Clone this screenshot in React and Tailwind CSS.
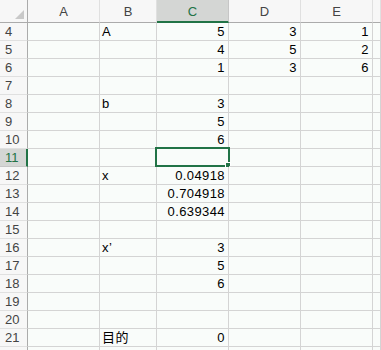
import React from "react";

const cols = ["A", "B", "C", "D", "E", ""];

// row number -> { B: label, C: value, D, E }
const data = {
  4: { B: "A", C: "5", D: "3", E: "1" },
  5: { C: "4", D: "5", E: "2" },
  6: { C: "1", D: "3", E: "6" },
  8: { B: "b", C: "3" },
  9: { C: "5" },
  10: { C: "6" },
  12: { B: "x", C: "0.04918" },
  13: { C: "0.704918" },
  14: { C: "0.639344" },
  16: { B: "x’", C: "3" },
  17: { C: "5" },
  18: { C: "6" },
  21: { B: "目的", C: "0" },
};

const rows = [];
for (let r = 4; r <= 22; r++) rows.push(r);

const SEL_COL = "C";
const SEL_ROW = 11;

export default function App() {
  return (
    <div
      className="w-[381px] h-[350px] overflow-hidden bg-[#f9fcfa] text-black"
      style={{ fontFamily: '"Liberation Sans", Arial, "Noto Sans CJK JP", sans-serif' }}
    >
      <div className="grid grid-cols-[28px_72px_57px_72px_72px_72px_1fr] auto-rows-[18px] grid-rows-[23px]">
        {/* corner */}
        <div className="relative bg-[#f7f7f7] border-r border-b border-[#ababab]">
          <div className="absolute right-[3px] bottom-[3px] w-0 h-0 border-l-[9px] border-l-transparent border-b-[9px] border-b-[#c9c9c9]" />
        </div>

        {/* column headers */}
        {cols.map((c, i) =>
          c === SEL_COL ? (
            <div
              key={i}
              className="flex items-end justify-center pb-[2px] bg-[#d4d6d4] border-r border-[#c6c6c6] border-b-2 border-b-[#217346] text-[13px] leading-[15px] text-[#217346]"
            >
              {c}
            </div>
          ) : (
            <div
              key={i}
              className="flex items-end justify-center pb-[3px] bg-[#f7f7f7] border-r border-[#e0e0e0] border-b border-b-[#ababab] text-[13px] leading-[15px] text-[#444444]"
            >
              {c}
            </div>
          )
        )}

        {rows.map((r) => (
          <React.Fragment key={r}>
            {r === SEL_ROW ? (
              <div className="flex items-end pl-[5px] pb-[1px] bg-[#d4d6d4] border-r-2 border-r-[#217346] border-b border-b-[#c6c6c6] text-[13px] leading-[15px] text-[#217346]">
                {r}
              </div>
            ) : (
              <div className="flex items-end pl-[5px] pb-[1px] bg-[#f7f7f7] border-r border-r-[#ababab] border-b border-b-[#e0e0e0] text-[13px] leading-[15px] text-[#444444]">
                {r < 22 ? r : ""}
              </div>
            )}
            {cols.map((c, i) => {
              const v = data[r] && data[r][c];
              const selected = c === SEL_COL && r === SEL_ROW;
              return (
                <div
                  key={i}
                  className={
                    "relative flex items-end pb-[1px] border-r border-b border-[#d4d4d4] text-[13px] leading-[15px] tracking-[0.4px] " +
                    (c === "B" ? "justify-start pl-[2px]" : "justify-end pr-[3px]")
                  }
                >
                  {v}
                  {selected && (
                    <div className="absolute -left-[2px] -top-[2px] -right-[2px] -bottom-[1px] border-2 border-[#217346]">
                      <div className="absolute -right-[3px] -bottom-[3px] w-[6px] h-[6px] bg-[#217346] border border-white" />
                    </div>
                  )}
                </div>
              );
            })}
          </React.Fragment>
        ))}
      </div>
    </div>
  );
}
